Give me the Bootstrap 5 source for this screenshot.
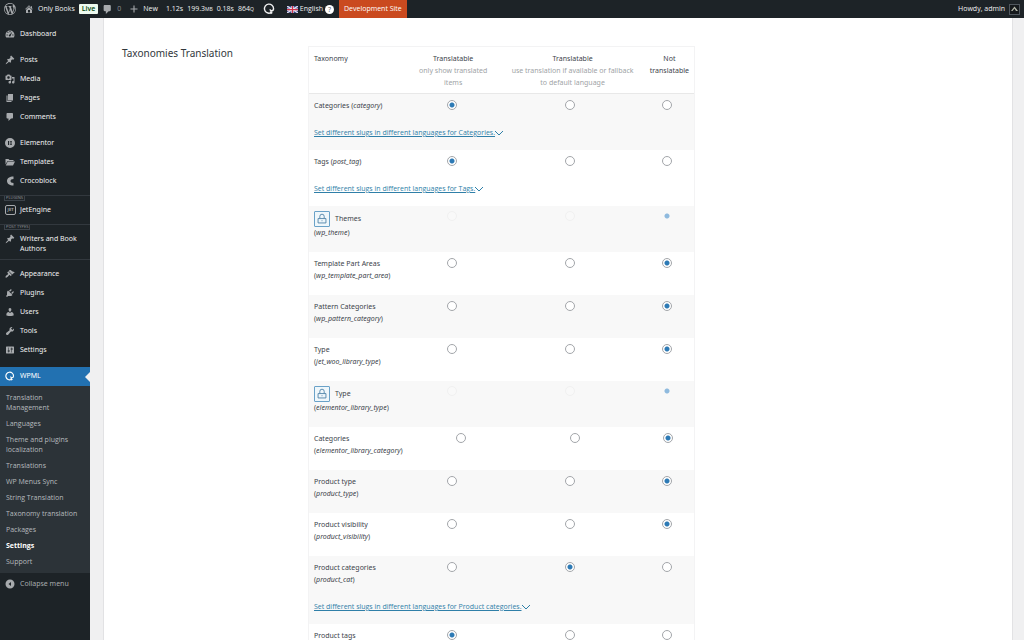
<!DOCTYPE html>
<html lang="en">
<head>
<meta charset="utf-8">
<meta name="viewport" content="width=device-width, initial-scale=1">
<title>Settings - Only Books</title>
<link href="https://cdn.jsdelivr.net/npm/bootstrap@5.3.0/dist/css/bootstrap.min.css" rel="stylesheet">
<style>
  body { font-family: "Open Sans", "Noto Sans", sans-serif; font-size: 7px; line-height: 12px; color: #3c434a; background: #f0f0f1; }
  a { color: inherit; text-decoration: none; }
  svg { display: block; flex: none; }

  .topbar { height: 18px; background: #1d2327; color: #f0f0f1; padding: 0 4px; }
  .topbar svg { fill: #a7aaad; }
  .topbar .site { margin-left: 8px; }
  .live { background: #edfaef; color: #00450c; line-height: 10px; padding: 0 3px; border-radius: 1px; font-weight: 600; }
  .dim { color: #8c8f94; }
  .unit { font-size: 5px; }
  .topbar .ring { fill: none; stroke: #f0f0f1; }
  .lang { gap: 2px; margin-left: 11px; }
  .help { width: 9px; height: 9px; line-height: 9px; border-radius: 50%; background: #fff; color: #50575e; text-align: center; }
  .devsite { background: #ca4a1f; color: #fff; padding: 0 5px; margin-left: 5px; }
  .avatar { background: #50575e; }

  .sidebar { width: 90px; background: #1d2327; color: #f0f0f1; padding-top: 7px; font-family: "Noto Sans", "Open Sans", sans-serif; }
  .item { display: flex; gap: 5px; padding: 4px 4px 5px 5px; line-height: 10px; }
  .item svg { fill: #a7aaad; width: 10px; height: 10px; }
  .gap-top { margin-top: 7px; }
  .group { font-size: 4px; line-height: 5px; margin-top: 4px; color: #8c8f94; border-top: 1px solid #32383e; padding-left: 4px; }
  .group span { display: block; width: max-content; border: 1px solid #3c434a; border-top: 0; padding: 0 1px; line-height: 4px; }
  .rule { border-top: 1px solid #32383e; margin-bottom: 5px; }
  .jet { width: 11px; height: 10px; border: 1px solid #a7aaad; border-radius: 2px; color: #a7aaad; font-size: 4px; line-height: 8px; font-weight: 700; text-align: center; margin-right: -1px; }
  .current { background: #2271b1; color: #fff; position: relative; }
  .current svg { fill: none; stroke: #fff; }
  .current::after { content: ""; position: absolute; right: 0; top: 5px; border: 5px solid transparent; border-left: 0; border-right-color: #f0f0f1; }
  .submenu { background: #2c3338; color: #b6babe; padding: 4px 0 3px; margin: 0; list-style: none; font-family: "Open Sans", sans-serif; }
  .submenu a { display: block; padding: 3px 6px; line-height: 10px; }
  .submenu .on { color: #fff; font-weight: 700; }
  .collapse-btn { border: 0; background: none; color: #a7aaad; margin-top: 2px; }

  .panel { background: #fff; border: 1px solid #e2e2e4; border-width: 0 1px; margin: 0 11px 0 13px; padding: 28px 18px 0; }
  .panel h2 { font-family: "Noto Sans", sans-serif; font-size: 10px; line-height: 14px; font-weight: 400; width: 186px; color: #32373c; margin: 0; flex: none; }
  .tax { width: 387px; flex: none; border: 1px solid #f3f3f4; font-family: "Noto Sans", "Open Sans", sans-serif; }
  .tax tr { display: flex; }
  .tax thead tr { border-bottom: 1px solid #e8e8e8; padding: 6px 0 4px; }
  .tax tbody tr:nth-child(odd) { background: #f8f8f8; }
  .tax th { font-weight: 400; }
  .tax th, .tax td { padding: 0; }
  .tax td { padding: 6px 3px 13px 0; }
  .tax .locked td { padding-top: 5px; }
  .tax .name { flex: none; width: 97px; padding-left: 5px; padding-right: 0; text-align: left; white-space: nowrap; }
  .tax .wide { width: 108px; }
  .tax .c1, .tax .c2, .tax .c3 { flex: 94 0 0; min-width: 0; text-align: center; }
  .tax .c2 { flex-grow: 144; }
  .tax .c3 { flex-grow: 49; }
  .tax small { font-size: 7px; color: #a0a3a6; display: block; }
  .tax .has-slug { padding-bottom: 11px; }
  .slug { display: flex; width: max-content; margin-top: 15px; color: #2f7fa8; font-family: "Open Sans", sans-serif; }
  .slug span { text-decoration: underline; }
  .slug svg { fill: none; stroke: #2f7fa8; margin-top: 3px; }
  .lock { display: flex; align-items: center; gap: 5px; height: 16px; }
  .lock svg { border: 1px solid #6aa2c8; background: #eff7fb; fill: none; stroke: #4a7fa5; border-radius: 1px; }
  .tax input { appearance: none; display: block; width: 10px; height: 10px; margin: 0 auto; border: 1px solid #a3a6aa; border-radius: 50%; background: #fff; }
  .tax input:checked { background: radial-gradient(circle, #2d7ab5 0 2px, #fff 3px); }
  .tax input:disabled { border-color: #f1f1f1; background: #f9f9f9; }
  .tax input:disabled:checked { border-color: transparent; background: radial-gradient(circle, #8fbade 0 2px, transparent 3px); }
</style>
</head>
<body class="vh-100 overflow-hidden d-flex flex-column">
<header class="topbar d-flex align-items-center flex-shrink-0">
  <a href="#" aria-label="WordPress"><svg width="12" height="12" viewBox="0 0 20 20"><path d="M20 10c0-5.510-4.490-10-10-10C4.480 0 0 4.490 0 10c0 5.520 4.480 10 10 10 5.510 0 10-4.480 10-10zM7.780 15.370L4.370 6.220c.55-.02 1.170-.08 1.170-.08.5-.06.44-1.130-.06-1.110 0 0-1.450.11-2.370.11-.18 0-.37 0-.58-.01C4.120 2.690 6.870 1.110 10 1.110c2.330 0 4.450.87 6.050 2.340-.68-.11-1.650.39-1.650 1.580 0 .74.45 1.360.9 2.100.35.61.55 1.360.55 2.460 0 1.490-1.400 5-1.400 5l-3.030-8.370c.54-.02.82-.17.82-.17.5-.05.44-1.250-.06-1.220 0 0-1.440.12-2.380.12-.87 0-2.330-.12-2.330-.12-.5-.03-.56 1.200-.06 1.220l.92.08 1.260 3.410zM17.410 10c.24-.64.74-1.870.43-4.250.7 1.290 1.050 2.710 1.050 4.250 0 3.290-1.730 6.240-4.400 7.780.97-2.590 1.940-5.200 2.920-7.780zM6.100 18.090C3.120 16.650 1.110 13.530 1.110 10c0-1.300.23-2.480.72-3.590C3.250 10.300 4.670 14.200 6.100 18.090zm4.030-6.630l2.580 6.980c-.86.29-1.760.45-2.710.45-.79 0-1.570-.11-2.290-.33.81-2.380 1.620-4.740 2.420-7.100z"/></svg></a>
  <a href="#" class="site d-flex align-items-center"><svg width="10" height="10" viewBox="0 0 20 20"><path d="M16 8.500l1.530 1.530-1.060 1.060L10 4.600l-6.470 6.490-1.060-1.060L10 2.500l4 4v-2h2v4zm-6-2.460l6 5.990V18H4v-5.970zM12 17v-5H8v5h4z"/></svg><span class="ms-1">Only Books</span></a>
  <span class="live ms-1">Live</span>
  <a href="#" class="d-flex align-items-center ms-1"><svg width="11" height="11" viewBox="0 0 20 20"><path d="M5 2h9c1.100 0 2 .9 2 2v7c0 1.100-.9 2-2 2h-2l-5 5v-5H5c-1.100 0-2-.9-2-2V4c0-1.100.9-2 2-2z"/></svg><span class="ms-1 dim">0</span></a>
  <a href="#" class="site d-flex align-items-center"><svg width="10" height="10" viewBox="0 0 20 20"><path d="M17 9v2.200h-5.900V17H8.900v-5.800H3V9h5.900V3h2.200v6z"/></svg><span class="ms-1">New</span></a>
  <a href="#" class="d-flex gap-1 ms-2"><span>1.12s</span><span>199.3<span class="unit">MB</span></span><span>0.18s</span><span>864<span class="unit">Q</span></span></a>
  <a href="#" class="ms-2" aria-label="WPML"><svg class="ring" width="14" height="14" viewBox="0 0 20 20"><path d="M12.500 15.500A6.500 6.500 0 1 1 16.500 9.500c0 2-1.500 3-3 3-1.500 0-2-1-2-2" stroke-width="2"/><path d="M12 13.500l2 3" stroke-width="3"/></svg></a>
  <a href="#" class="lang d-flex align-items-center"><svg width="11" height="7" viewBox="0 0 22 14"><path d="M0 0h22v14H0z" fill="#34468c"/><path d="M0 0l22 14M22 0L0 14" stroke="#e8e4ee" stroke-width="2.500"/><path d="M11 0v14M0 7h22" stroke="#fff" stroke-width="4.500"/><path d="M11 0v14M0 7h22" stroke="#d0324b" stroke-width="2.500"/></svg><span>English</span><span class="help">?</span></a>
  <a href="#" class="devsite h-100 d-flex align-items-center">Development Site</a>
  <a href="#" class="d-flex align-items-center ms-auto gap-1">Howdy, admin<svg class="avatar" width="11" height="11" viewBox="0 0 22 22"><path fill="#15191c" d="M2 2h18v18H2z"/><path fill="#b5b8aa" d="M11 5l7 9h-4l-3-5-4 5H4z"/></svg></a>
</header>

<div class="d-flex flex-grow-1 overflow-hidden">
  <nav class="sidebar flex-shrink-0" aria-label="Main menu">
    <a href="#" class="item"><svg viewBox="0 0 20 20"><path fill-rule="evenodd" d="M1 12a9 9 0 0 1 18 0c0 2-.7 4-1.500 5H2.500C1.500 16 1 14 1 12zm8-8v2.500h2V4zM4.200 6.500l1.700 1.700 1.400-1.400-1.700-1.700zM3 11v2h2.500v-2zm11.500 0v2H17v-2zM14.500 5.500l-5 5.500a2 2 0 1 0 2 2z"/></svg>Dashboard</a>
    <a href="#" class="item gap-top"><svg viewBox="0 0 20 20"><path id="pin" d="M10.440 3.020l1.820-1.820 6.360 6.350-1.830 1.820c-1.050-.68-2.480-.57-3.410.36l-.75.75c-.92.93-1.040 2.350-.35 3.410l-1.830 1.820-2.410-2.410-2.800 2.790c-.42.42-3.380 2.710-3.800 2.290s1.860-3.390 2.280-3.810l2.790-2.790L4.100 9.360l1.830-1.820c1.050.69 2.480.57 3.400-.36l.75-.75c.93-.92 1.050-2.350.36-3.410z"/></svg>Posts</a>
    <a href="#" class="item"><svg viewBox="0 0 20 20"><path d="M13 11V4c0-.55-.45-1-1-1h-1.670L9 1H5L3.670 3H2c-.55 0-1 .45-1 1v7c0 .55.45 1 1 1h10c.55 0 1-.45 1-1zM7 4.500c1.380 0 2.500 1.120 2.500 2.500S8.380 9.500 7 9.500 4.500 8.380 4.500 7 5.620 4.500 7 4.500zM14 6h5v10.500c0 1.380-1.120 2.500-2.500 2.500S14 17.880 14 16.500s1.120-2.500 2.500-2.500c.17 0 .34.02.5.05V9h-3V6zm-4 8.050V13h2v3.500c0 1.380-1.120 2.500-2.500 2.500S7 17.880 7 16.500 8.120 14 9.500 14c.17 0 .34.02.5.05z"/></svg>Media</a>
    <a href="#" class="item"><svg viewBox="0 0 20 20"><path d="M6 15V2h10v13H6zm-1 1h8v2H3V5h2v11z"/></svg>Pages</a>
    <a href="#" class="item"><svg viewBox="0 0 20 20"><path d="M5 2h9c1.100 0 2 .9 2 2v7c0 1.100-.9 2-2 2h-2l-5 5v-5H5c-1.100 0-2-.9-2-2V4c0-1.100.9-2 2-2z"/></svg>Comments</a>
    <a href="#" class="item gap-top"><svg viewBox="0 0 20 20"><path fill-rule="evenodd" d="M10 0a10 10 0 1 0 0 20 10 10 0 0 0 0-20zM6 6h2v8H6zm3.500 0H14v1.600H9.500zm0 3.200H14v1.600H9.500zm0 3.200H14V14H9.500z"/></svg>Elementor</a>
    <a href="#" class="item"><svg viewBox="0 0 20 20"><path d="M1 4h6l2 2h8v2H5l-4 7zM5.500 9H20l-4 8H1.500z"/></svg>Templates</a>
    <a href="#" class="item"><svg viewBox="0 0 20 20"><path d="M17 1v5c-4 0-6 1.500-6 4s2 4 6 4v5C9 19 4 15.500 4 10S9 1 17 1z"/></svg>Crocoblock</a>
    <div class="group"><span>PLUGINS</span></div>
    <a href="#" class="item"><span class="jet">JET</span>JetEngine</a>
    <div class="group"><span>POST TYPES</span></div>
    <a href="#" class="item"><svg viewBox="0 0 20 20"><use href="#pin"/></svg><span>Writers and Book<br>Authors</span></a>
    <div class="rule"></div>
    <a href="#" class="item"><svg viewBox="0 0 20 20"><path d="M14.480 11.060L7.410 3.990l1.500-1.500c.5-.56 2.300-.47 3.510.32 1.210.8 1.430 1.280 2.910 2.100 1.180.64 2.450 1.260 4.450.85zm-.71.71L6.700 4.700 4.930 6.470c-.39.39-.39 1.020 0 1.410l1.060 1.060c.39.39.39 1.030 0 1.420-.6.6-1.430 1.110-2.210 1.690-.35.26-.7.53-1.010.84C1.430 14.230.4 16.080 1.400 17.070c.99 1 2.840-.03 4.180-1.360.31-.31.58-.66.85-1.020.57-.78 1.080-1.610 1.690-2.210.39-.39 1.020-.39 1.410 0l1.060 1.060c.39.39 1.020.39 1.410 0z"/></svg>Appearance</a>
    <a href="#" class="item"><svg viewBox="0 0 20 20"><path d="M13.110 4.360L9.870 7.600 8 5.730l3.240-3.240c.35-.34 1.050-.2 1.560.32.52.51.66 1.210.31 1.550zm-8 1.770l.91-1.120 9.010 9.010-1.190.84c-.71.71-2.630 1.160-3.820 1.160H6.140L4.900 17.260c-.59.59-1.540.59-2.120 0-.59-.58-.59-1.530 0-2.120l1.240-1.240v-3.880c0-1.130.4-3.190 1.090-3.890zm7.260 3.970l3.240-3.240c.34-.35 1.040-.21 1.550.31.52.51.66 1.210.31 1.550l-3.240 3.250z"/></svg>Plugins</a>
    <a href="#" class="item"><svg viewBox="0 0 20 20"><path d="M10 9.250c-2.270 0-2.730-3.440-2.730-3.440C7 4.020 7.820 2 9.970 2c2.160 0 2.980 2.020 2.710 3.810 0 0-.41 3.440-2.680 3.440zm0 2.570L12.720 10c2.390 0 4.520 2.330 4.520 4.530v2.490s-3.650 1.130-7.240 1.130c-3.650 0-7.240-1.130-7.240-1.130v-2.490c0-2.250 1.940-4.480 4.470-4.480z"/></svg>Users</a>
    <a href="#" class="item"><svg viewBox="0 0 20 20"><path d="M16.680 9.770c-1.340 1.340-3.300 1.670-4.950.99l-5.410 6.520c-.99.99-2.590.99-3.580 0s-.99-2.590 0-3.570l6.520-5.420c-.68-1.650-.35-3.610.99-4.950 1.280-1.280 3.120-1.620 4.720-1.060l-2.890 2.890 2.820 2.820 2.860-2.870c.53 1.580.18 3.390-1.080 4.650z"/></svg>Tools</a>
    <a href="#" class="item"><svg viewBox="0 0 20 20"><path d="M18 16V4c0-.55-.45-1-1-1H3c-.55 0-1 .45-1 1v12c0 .55.45 1 1 1h14c.55 0 1-.45 1-1zM8 11h1c.55 0 1 .45 1 1s-.45 1-1 1H8v1.500c0 .28-.22.5-.5.5s-.5-.22-.5-.5V13H6c-.55 0-1-.45-1-1s.45-1 1-1h1V5.500c0-.28.22-.5.5-.5s.5.220.5.5V11zm5-2h-1c-.55 0-1-.45-1-1s.45-1 1-1h1V5.500c0-.28.22-.5.5-.5s.5.220.5.5V7h1c.55 0 1 .45 1 1s-.45 1-1 1h-1v5.500c0 .28-.22.5-.5.5s-.5-.22-.5-.5V9z"/></svg>Settings</a>
    <a href="#" class="item gap-top current"><svg viewBox="2 1 17 17"><path d="M12.500 15.500A6.500 6.500 0 1 1 16.500 9.500c0 2-1.500 3-3 3-1.500 0-2-1-2-2" stroke-width="2"/><path d="M12 13.500l2 3" stroke-width="3"/></svg>WPML</a>
    <ul class="submenu">
      <li><a href="#">Translation<br>Management</a></li>
      <li><a href="#">Languages</a></li>
      <li><a href="#">Theme and plugins<br>localization</a></li>
      <li><a href="#">Translations</a></li>
      <li><a href="#">WP Menus Sync</a></li>
      <li><a href="#">String Translation</a></li>
      <li><a href="#">Taxonomy translation</a></li>
      <li><a href="#">Packages</a></li>
      <li><a href="#" class="on">Settings</a></li>
      <li><a href="#">Support</a></li>
    </ul>
    <button type="button" class="item collapse-btn"><svg viewBox="0 0 20 20"><path fill-rule="evenodd" d="M10 1a9 9 0 1 0 0 18 9 9 0 0 0 0-18zm2 5v8l-5-4z"/></svg>Collapse menu</button>
  </nav>

  <main class="flex-grow-1">
    <section class="panel d-flex align-items-start">
      <h2>Taxonomies Translation</h2>
      <table class="tax">
        <thead>
          <tr><th class="name">Taxonomy</th><th class="c1">Translatable<small>only show translated<br>items</small></th><th class="c2">Translatable<small>use translation if available or fallback<br>to default language</small></th><th class="c3">Not<br>translatable</th></tr>
        </thead>
        <tbody>
          <tr><td class="name has-slug">Categories (<i>category</i>)<a href="#" class="slug"><span>Set different slugs in different languages for Categories.</span><svg width="8" height="6" viewBox="0 0 8 6"><path d="M0 1l4 4 4-4"/></svg></a></td><td class="c1"><input type="radio" name="t1" aria-label="Categories: only translated" checked></td><td class="c2"><input type="radio" name="t1" aria-label="Categories: fallback"></td><td class="c3"><input type="radio" name="t1" aria-label="Categories: not translatable"></td></tr>
          <tr><td class="name has-slug">Tags (<i>post_tag</i>)<a href="#" class="slug"><span>Set different slugs in different languages for Tags.</span><svg width="8" height="6" viewBox="0 0 8 6"><path d="M0 1l4 4 4-4"/></svg></a></td><td class="c1"><input type="radio" name="t2" aria-label="Tags: only translated" checked></td><td class="c2"><input type="radio" name="t2" aria-label="Tags: fallback"></td><td class="c3"><input type="radio" name="t2" aria-label="Tags: not translatable"></td></tr>
          <tr class="locked"><td class="name"><span class="lock"><svg width="16" height="16" viewBox="0 0 16 16"><path d="M3.500 7.500h9v5h-9zM5.500 7V5a2.500 2.500 0 0 1 5 0v2M8 9.500v1"/></svg>Themes</span>(<i>wp_theme</i>)</td><td class="c1"><input type="radio" name="t3" aria-label="Themes: only translated" disabled></td><td class="c2"><input type="radio" name="t3" aria-label="Themes: fallback" disabled></td><td class="c3"><input type="radio" name="t3" aria-label="Themes: not translatable" disabled checked></td></tr>
          <tr><td class="name">Template Part Areas<br>(<i>wp_template_part_area</i>)</td><td class="c1"><input type="radio" name="t4" aria-label="Template Part Areas: only translated"></td><td class="c2"><input type="radio" name="t4" aria-label="Template Part Areas: fallback"></td><td class="c3"><input type="radio" name="t4" aria-label="Template Part Areas: not translatable" checked></td></tr>
          <tr><td class="name">Pattern Categories<br>(<i>wp_pattern_category</i>)</td><td class="c1"><input type="radio" name="t5" aria-label="Pattern Categories: only translated"></td><td class="c2"><input type="radio" name="t5" aria-label="Pattern Categories: fallback"></td><td class="c3"><input type="radio" name="t5" aria-label="Pattern Categories: not translatable" checked></td></tr>
          <tr><td class="name">Type<br>(<i>jet_woo_library_type</i>)</td><td class="c1"><input type="radio" name="t6" aria-label="Type: only translated"></td><td class="c2"><input type="radio" name="t6" aria-label="Type: fallback"></td><td class="c3"><input type="radio" name="t6" aria-label="Type: not translatable" checked></td></tr>
          <tr class="locked"><td class="name"><span class="lock"><svg width="16" height="16" viewBox="0 0 16 16"><path d="M3.500 7.500h9v5h-9zM5.500 7V5a2.500 2.500 0 0 1 5 0v2M8 9.500v1"/></svg>Type</span>(<i>elementor_library_type</i>)</td><td class="c1"><input type="radio" name="t7" aria-label="Library type: only translated" disabled></td><td class="c2"><input type="radio" name="t7" aria-label="Library type: fallback" disabled></td><td class="c3"><input type="radio" name="t7" aria-label="Library type: not translatable" disabled checked></td></tr>
          <tr><td class="name wide">Categories<br>(<i>elementor_library_category</i>)</td><td class="c1"><input type="radio" name="t8" aria-label="Library categories: only translated"></td><td class="c2"><input type="radio" name="t8" aria-label="Library categories: fallback"></td><td class="c3"><input type="radio" name="t8" aria-label="Library categories: not translatable" checked></td></tr>
          <tr><td class="name">Product type<br>(<i>product_type</i>)</td><td class="c1"><input type="radio" name="t9" aria-label="Product type: only translated"></td><td class="c2"><input type="radio" name="t9" aria-label="Product type: fallback"></td><td class="c3"><input type="radio" name="t9" aria-label="Product type: not translatable" checked></td></tr>
          <tr><td class="name">Product visibility<br>(<i>product_visibility</i>)</td><td class="c1"><input type="radio" name="t10" aria-label="Product visibility: only translated"></td><td class="c2"><input type="radio" name="t10" aria-label="Product visibility: fallback"></td><td class="c3"><input type="radio" name="t10" aria-label="Product visibility: not translatable" checked></td></tr>
          <tr><td class="name has-slug">Product categories<br>(<i>product_cat</i>)<a href="#" class="slug"><span>Set different slugs in different languages for Product categories.</span><svg width="8" height="6" viewBox="0 0 8 6"><path d="M0 1l4 4 4-4"/></svg></a></td><td class="c1"><input type="radio" name="t11" aria-label="Product categories: only translated"></td><td class="c2"><input type="radio" name="t11" aria-label="Product categories: fallback" checked></td><td class="c3"><input type="radio" name="t11" aria-label="Product categories: not translatable"></td></tr>
          <tr><td class="name">Product tags</td><td class="c1"><input type="radio" name="t12" aria-label="Product tags: only translated" checked></td><td class="c2"><input type="radio" name="t12" aria-label="Product tags: fallback"></td><td class="c3"><input type="radio" name="t12" aria-label="Product tags: not translatable"></td></tr>
        </tbody>
      </table>
    </section>
  </main>
</div>
<script src="https://cdn.jsdelivr.net/npm/bootstrap@5.3.0/dist/js/bootstrap.bundle.min.js"></script>
</body>
</html>
